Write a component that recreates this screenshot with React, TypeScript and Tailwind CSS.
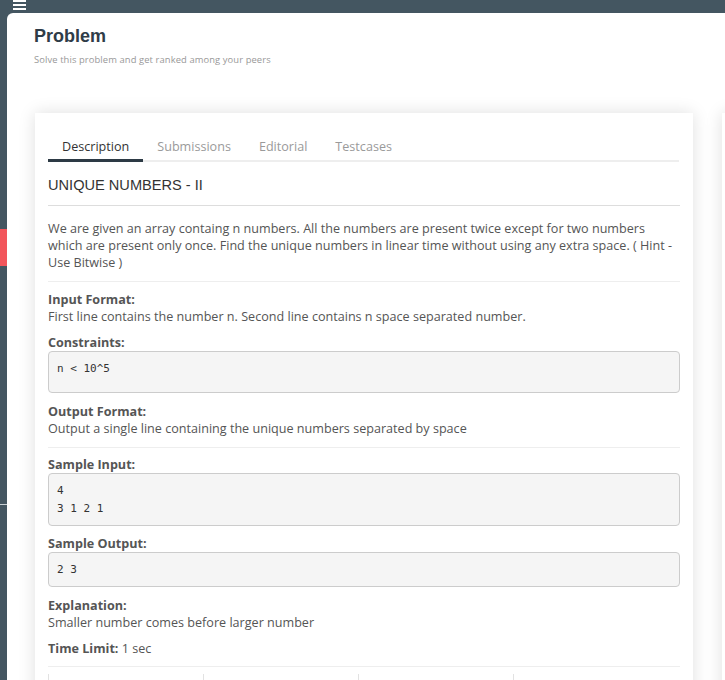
import React from "react";

const sans = { fontFamily: '"Open Sans", "Noto Sans", sans-serif' };
const arial = { fontFamily: '"Liberation Sans", Arial, sans-serif' };
const mono = { fontFamily: '"DejaVu Sans Mono", "Liberation Mono", monospace' };

function Label({ children }: { children: React.ReactNode }) {
  return <div className="text-[12.6px] leading-[17px] font-bold text-[#555]">{children}</div>;
}

function Pre({ lines, className = "" }: { lines: string[]; className?: string }) {
  return (
    <pre
      style={mono}
      className={`border border-[#ccc] bg-[#f5f5f5] rounded-[4px] px-[8px] pt-[8px] pb-[7px] text-[11px] leading-[18px] text-[#333] whitespace-pre ${className}`}
    >
      {lines.join("\n")}
    </pre>
  );
}

const tabs = ["Description", "Submissions", "Editorial", "Testcases"];

export default function App() {
  return (
    <div className="h-[680px] w-[725px] overflow-hidden bg-[#445661] flex flex-col" style={sans}>
      {/* top bar with menu icon */}
      <div className="h-[13px] shrink-0 pl-[13px] flex flex-col gap-[2px]">
        <span className="block w-[13px] h-[2px] bg-white" />
        <span className="block w-[13px] h-[2px] bg-white" />
        <span className="block w-[13px] h-[2px] bg-white" />
      </div>

      <div className="flex flex-1 min-h-0">
        {/* left sidebar strip */}
        <div className="w-[7px] shrink-0 flex flex-col">
          <div className="mt-[216px] h-[37px] bg-[#f2555b]" />
          <div className="mt-[238px] h-px bg-[#c9d0d4]" />
        </div>

        {/* main panel */}
        <div className="flex-1 bg-white rounded-tl-[6px] pl-[27px] pt-[12px] overflow-hidden">
          <h1 style={arial} className="text-[18px] leading-[22px] font-bold text-[#2f3c48]">
            Problem
          </h1>
          <p className="mt-[7px] text-[9.4px] tracking-[0.1px] leading-[12px] text-[#999]">
            Solve this problem and get ranked among your peers
          </p>

          <div className="mt-[47px] flex gap-[29px] pl-[1px]">
            {/* problem card */}
            <div className="w-[658px] shrink-0 bg-white shadow-[0_0_16px_rgba(0,0,0,0.13)] px-[13px] pt-[14px] h-[600px]">
              <div className="mr-px flex border-b-2 border-[#eee]">
                {tabs.map((t, i) => (
                  <div
                    key={t}
                    className={`-mb-[2px] px-[14px] pt-[11px] pb-[3px] border-b-[3px] text-[12.6px] leading-[18px] ${
                      i === 0 ? "border-[#2d3a45] text-[#333]" : "border-transparent text-[#9a9a9a]"
                    }`}
                  >
                    {t}
                  </div>
                ))}
              </div>

              <div style={arial} className="mt-[13px] text-[14.6px] leading-[20px] text-[#333]">
                UNIQUE NUMBERS - II
              </div>
              <div className="mt-[10px] h-px bg-[#ddd]" />

              <p className="mt-[14px] text-[12.6px] leading-[17px] text-[#555] pr-[4px]">
                We are given an array containg n numbers. All the numbers are present twice except for two numbers
                which are present only once. Find the unique numbers in linear time without using any extra space. (
                Hint - Use Bitwise )
              </p>
              <div className="mt-[10px] h-px bg-[#eee]" />

              <div className="mt-[9px]">
                <Label>Input Format:</Label>
                <div className="text-[12.6px] leading-[17px] text-[#555]">
                  First line contains the number n. Second line contains n space separated number.
                </div>
              </div>

              <div className="mt-[9px]">
                <Label>Constraints:</Label>
                <Pre lines={["n < 10^5"]} className="h-[42px]" />
              </div>

              <div className="mt-[10px]">
                <Label>Output Format:</Label>
                <div className="text-[12.6px] leading-[17px] text-[#555]">
                  Output a single line containing the unique numbers separated by space
                </div>
              </div>
              <div className="mt-[10px] h-px bg-[#eee]" />

              <div className="mt-[8px]">
                <Label>Sample Input:</Label>
                <Pre lines={["4", "3 1 2 1"]} />
              </div>

              <div className="mt-[9px]">
                <Label>Sample Output:</Label>
                <Pre lines={["2 3"]} />
              </div>

              <div className="mt-[10px]">
                <Label>Explanation:</Label>
                <div className="text-[12.6px] leading-[17px] text-[#555]">Smaller number comes before larger number</div>
              </div>

              <div className="mt-[9px] text-[12.6px] leading-[17px] text-[#555]">
                <span className="font-bold">Time Limit:</span> 1 sec
              </div>
              <div className="mt-[9px] h-px bg-[#eee]" />

              <div className="mt-[7px] grid grid-cols-4 w-[620px] h-[40px]">
                <div className="border-l border-[#e2e2e2]" />
                <div className="border-l border-[#e2e2e2]" />
                <div className="border-l border-[#e2e2e2]" />
                <div className="border-l border-[#e2e2e2]" />
              </div>
            </div>

            {/* next card, partly off screen */}
            <div className="w-[300px] shrink-0 bg-white shadow-[0_0_16px_rgba(0,0,0,0.13)] h-[600px]" />
          </div>
        </div>
      </div>
    </div>
  );
}
